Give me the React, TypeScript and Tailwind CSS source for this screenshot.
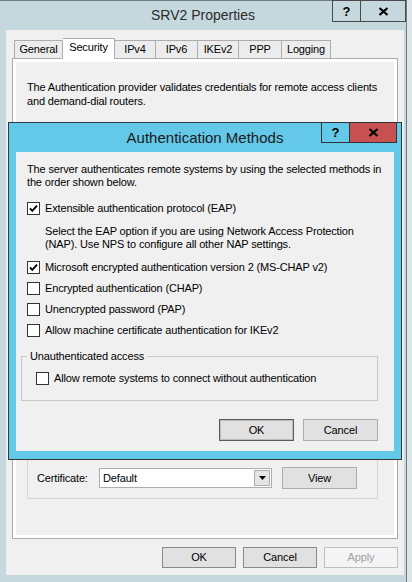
import React from "react";

const TABS = [
  { label: "General", w: "w-[49px] border-l" },
  { label: "Security", w: "w-[52px]", active: true },
  { label: "IPv4", w: "w-[41px]" },
  { label: "IPv6", w: "w-[42px]" },
  { label: "IKEv2", w: "w-[41px]" },
  { label: "PPP", w: "w-[43px]" },
  { label: "Logging", w: "w-[49px]" },
];

function CheckBox({ checked }: { checked?: boolean }) {
  return (
    <span className="w-[13px] h-[13px] border border-[#333333] bg-white flex items-center justify-center shrink-0">
      {checked && (
        <svg width="11" height="11" viewBox="0 0 11 11">
          <path d="M2 5.3 L4.3 7.8 L9 2.6" fill="none" stroke="#000" strokeWidth="1.9" />
        </svg>
      )}
    </span>
  );
}

function CheckRow({ label, checked }: { label: string; checked?: boolean }) {
  return (
    <div className="flex items-center gap-[5px] h-[21px]">
      <CheckBox checked={checked} />
      <span>{label}</span>
    </div>
  );
}

function CloseGlyph() {
  return (
    <svg width="11" height="9" viewBox="0 0 11 9">
      <path d="M1.5 1 L9.5 8 M9.5 1 L1.5 8" stroke="#000" strokeWidth="2.3" />
    </svg>
  );
}

export default function App() {
  return (
    <div className="w-[412px] h-[582px] bg-[#dce5e8] overflow-hidden font-['Liberation_Sans',Arial,sans-serif] text-[11px] leading-[13px] tracking-[-0.15px] text-black">
      <div className="relative w-[407px] h-full bg-[#c5d8de] border-t border-r border-[#6f7b80]">
        {/* title bar */}
        <div className="h-[29px] flex items-center justify-center text-[14px] tracking-normal text-[#2b2b2b]">
          SRV2 Properties
        </div>
        <div className="absolute top-[-1px] right-0 flex h-[22px]">
          <div className="w-[28px] border-l border-t border-b border-[#4a4a4a] flex items-center justify-center font-bold text-[13px]">
            ?
          </div>
          <div className="w-[46px] border border-[#4a4a4a] flex items-center justify-center">
            <CloseGlyph />
          </div>
        </div>

        {/* client */}
        <div className="ml-[6px] w-[398px] h-[545px] bg-[#f0f0f0] px-[6px] pt-[8px]">
          <div className="relative z-10 flex items-end h-[21px] -mb-px ml-[2px]">
            {TABS.map((t) =>
              t.active ? (
                <div
                  key={t.label}
                  className={`${t.w} h-[21px] bg-white border-t border-r border-[#acacac] flex items-center justify-center pb-[3px]`}
                >
                  {t.label}
                </div>
              ) : (
                <div
                  key={t.label}
                  className={`${t.w} h-[18px] mb-px bg-[#ececec] border-t border-r border-[#acacac] flex items-center justify-center`}
                >
                  {t.label}
                </div>
              )
            )}
          </div>
          <div className="h-[481px] border border-[#acacac] bg-white p-[3px]">
            <div className="h-full bg-[#f0f0f0] pl-[11px] pt-[18px] leading-[14px]">
              <p className="whitespace-nowrap">
                The Authentication provider validates credentials for remote access clients
                <br />
                and demand-dial routers.
              </p>
              <p className="mt-[11px] whitespace-nowrap">Authentication methods:</p>
              <div className="mt-[267px] w-[351px] h-[99px] border border-[#d5d5d5] flex flex-col justify-end pl-[9px] pb-[9px]">
                <div className="flex items-center h-[22px]">
                  <span className="w-[62px]">Certificate:</span>
                  <div className="w-[173px] h-[20px] border border-[#abadb3] bg-white flex items-center justify-between pl-[3px] pr-px">
                    <span>Default</span>
                    <span className="w-[16px] h-[16px] bg-[#e5e5e5] border border-[#acacac] flex items-center justify-center">
                      <svg width="7" height="4" viewBox="0 0 7 4">
                        <path d="M0 0 H7 L3.5 4 Z" fill="#000" />
                      </svg>
                    </span>
                  </div>
                  <button className="ml-[10px] w-[75px] h-[22px] bg-[#e1e1e1] border border-[#adadad] flex items-center justify-center">
                    View
                  </button>
                </div>
              </div>
            </div>
          </div>
          <div className="mt-[8px] flex justify-end gap-[7px]">
            <button className="w-[74px] h-[21px] bg-[#e1e1e1] border border-[#8a8a8a] flex items-center justify-center">
              OK
            </button>
            <button className="w-[74px] h-[21px] bg-[#e1e1e1] border border-[#8a8a8a] flex items-center justify-center">
              Cancel
            </button>
            <button className="w-[74px] h-[21px] bg-[#f4f4f4] border border-[#bfbfbf] text-[#a0a0a0] flex items-center justify-center">
              Apply
            </button>
          </div>
        </div>

        {/* Authentication Methods dialog */}
        <div className="absolute left-[8px] top-[121px] w-[394px] h-[338px] border border-[#2f3a3f] bg-[#64c8e8]">
          <div className="h-[29px] flex items-center justify-center text-[15px] tracking-normal text-[#1a1a1a]">
            Authentication Methods
          </div>
          <div className="absolute top-[-1px] right-[4px] flex h-[21px]">
            <div className="w-[28px] border-l border-t border-b border-[#333333] flex items-center justify-center font-bold text-[13px]">
              ?
            </div>
            <div className="w-[48px] bg-[#c75050] border border-[#333333] flex items-center justify-center">
              <CloseGlyph />
            </div>
          </div>
          <div className="ml-[7px] w-[378px] h-[299px] bg-[#f0f0f0] pt-[11px]">
            <div className="pl-[11px]">
              <p className="whitespace-nowrap">
                The server authenticates remote systems by using the selected methods in
                <br />
                the order shown below.
              </p>
              <div className="mt-[13px] flex items-center gap-[5px] h-[13px]">
                <CheckBox checked />
                <span>Extensible authentication protocol (EAP)</span>
              </div>
              <p className="mt-[10px] pl-[18px] whitespace-nowrap">
                Select the EAP option if you are using Network Access Protection
                <br />
                (NAP). Use NPS to configure all other NAP settings.
              </p>
              <div className="mt-[6px]">
                <CheckRow checked label="Microsoft encrypted authentication version 2 (MS-CHAP v2)" />
                <CheckRow label="Encrypted authentication (CHAP)" />
                <CheckRow label="Unencrypted password (PAP)" />
                <CheckRow label="Allow machine certificate authentication for IKEv2" />
              </div>
            </div>
            <fieldset className="mt-[9px] ml-[5px] w-[357px] border border-[#c8c8c8]">
              <legend className="ml-[5px] px-[3px] leading-[13px]">Unauthenticated access</legend>
              <div className="pl-[14px] pt-[9px] pb-[15px]">
                <div className="flex items-center gap-[5px] h-[13px]">
                  <CheckBox />
                  <span>Allow remote systems to connect without authentication</span>
                </div>
              </div>
            </fieldset>
            <div className="mt-[18px] pr-[16px] flex justify-end gap-[9px]">
              <button className="w-[75px] h-[22px] bg-[#e1e1e1] border border-[#5c5c5c] shadow-[inset_0_0_0_1px_#bcbcbc] flex items-center justify-center">
                OK
              </button>
              <button className="w-[75px] h-[22px] bg-[#e1e1e1] border border-[#adadad] flex items-center justify-center">
                Cancel
              </button>
            </div>
          </div>
        </div>
      </div>
    </div>
  );
}
